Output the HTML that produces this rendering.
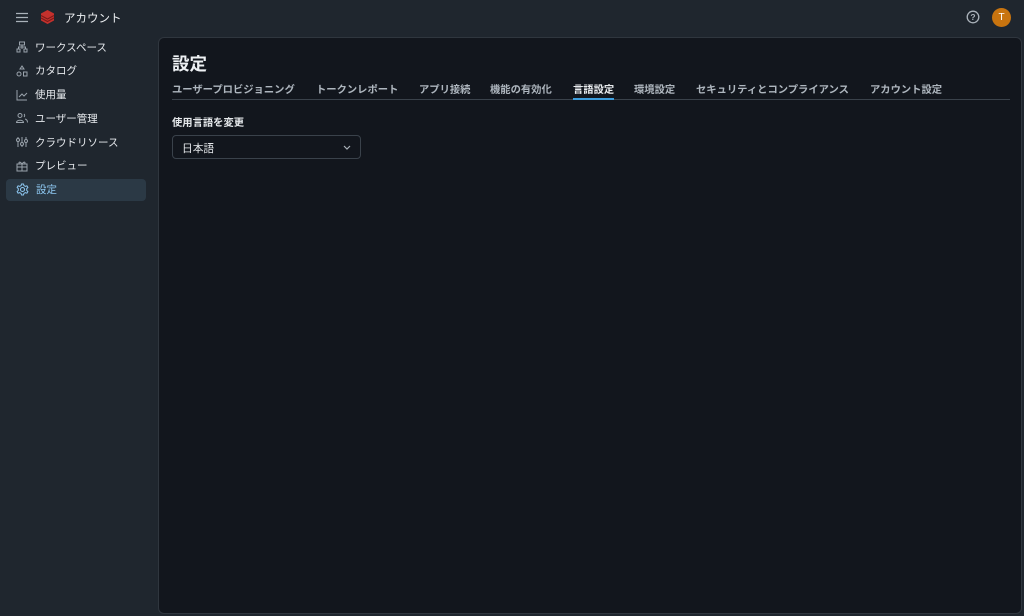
<!DOCTYPE html>
<html><head><meta charset="utf-8"><style>
*{margin:0;padding:0;box-sizing:border-box}
body{width:1024px;height:616px;background:#1f262e;font-family:"Liberation Sans","Noto Sans CJK JP",sans-serif;color:#e1e5ea;position:relative;overflow:hidden;font-size:12px}
.top{position:absolute;left:0;top:0;width:1024px;height:36px}
.nav{position:absolute;left:6px;top:36px;width:140px}
.item{height:22px;margin-bottom:1.8px;display:flex;align-items:center;padding-left:10px;font-size:10.5px;color:#e6e9ed;border-radius:4px}
.item svg{margin-right:7px}
.item.act{background:#2b3945;color:#8fc9f3}
.main{position:absolute;left:158px;top:37px;width:864px;height:577px;background:#12161d;border:1px solid #2f363e;border-radius:6px}
h1{position:absolute;left:13px;top:13px;font-size:17.5px;font-weight:bold;color:#eef1f4}
.tabs{position:absolute;left:13px;top:42px;width:838px;height:20px;border-bottom:1px solid #3a424b;font-size:10.3px;color:#aeb6be;font-weight:bold}
.tabs span{position:absolute;top:1px;white-space:nowrap}
.tabs .a{color:#e8ebee}
.tabs .a:after{content:"";position:absolute;left:0;right:0;top:17px;height:2px;background:#3c9ddd}
.lbl{position:absolute;left:13px;top:76px;font-size:10.3px;font-weight:bold;color:#e6e9ec}
.sel{position:absolute;left:13px;top:97px;width:189px;height:24px;border:1px solid #3a424b;border-radius:4px;padding:5px 9px;font-size:10.7px;color:#e6e9ec}
</style></head><body>
<div class="top">
<svg style="position:absolute;left:16px;top:12px" width="12" height="11"><path d="M0 1.5h12M0 5.5h12M0 9.5h12" stroke="#aab2ba" stroke-width="1.3"/></svg>
<svg style="position:absolute;left:40px;top:9px" width="15" height="16" viewBox="0 0 15 16"><path d="M7.5 1L14 4.5V11.5L7.5 15L1 11.5V4.5Z" fill="#c4312d"/><path d="M1 6.5l6.5 3.5 6.5-3.5M1 9l6.5 3.5 6.5-3.5" stroke="#7a1a18" fill="none"/></svg>
<div style="position:absolute;left:64px;top:10px;font-size:11.5px;color:#eceff2">アカウント</div>
<svg style="position:absolute;left:966px;top:10px" width="14" height="14"><circle cx="7" cy="7" r="5.8" stroke="#aab2ba" stroke-width="1.3" fill="none"/><text x="7" y="10.2" font-size="8.5" font-weight="bold" text-anchor="middle" fill="#aab2ba" font-family="Liberation Sans">?</text></svg>
<div style="position:absolute;left:992px;top:8px;width:19px;height:19px;border-radius:50%;background:#c8740f;color:#fff;font-size:10px;text-align:center;line-height:19px">T</div>
</div>
<div class="nav">
<div class="item"><svg width="12" height="12"><rect x="3.5" y="1" width="5" height="3" stroke="#9aa3ac" fill="none"/><rect x="1" y="8" width="3" height="3" stroke="#9aa3ac" fill="none"/><rect x="8" y="8" width="3" height="3" stroke="#9aa3ac" fill="none"/><path d="M6 4v4M2.5 8V6h7v2" stroke="#9aa3ac" fill="none"/></svg>ワークスペース</div>
<div class="item"><svg width="12" height="12"><path d="M6 1l2 3H4z" stroke="#9aa3ac" fill="none"/><circle cx="3" cy="9" r="2" stroke="#9aa3ac" fill="none"/><rect x="7.5" y="7" width="3.5" height="4" stroke="#9aa3ac" fill="none"/></svg>カタログ</div>
<div class="item"><svg width="12" height="12"><path d="M1 1v10h10M3 8l3-3 2 2 3-3" stroke="#9aa3ac" fill="none"/></svg>使用量</div>
<div class="item"><svg width="12" height="12"><circle cx="4" cy="3.5" r="2" stroke="#9aa3ac" fill="none"/><path d="M0.5 10.5c0-3 7-3 7 0zM8 2a2 2 0 010 3M9 7c2 .5 2.5 2 2.5 3.5" stroke="#9aa3ac" fill="none"/></svg>ユーザー管理</div>
<div class="item"><svg width="12" height="12"><path d="M2 1v10M6 1v10M10 1v10" stroke="#9aa3ac"/><circle cx="2" cy="4" r="1.5" fill="#1f262e" stroke="#9aa3ac"/><circle cx="6" cy="8" r="1.5" fill="#1f262e" stroke="#9aa3ac"/><circle cx="10" cy="5" r="1.5" fill="#1f262e" stroke="#9aa3ac"/></svg>クラウドリソース</div>
<div class="item"><svg width="12" height="12"><rect x="1" y="4" width="10" height="7" stroke="#9aa3ac" fill="none"/><path d="M1 7h10M6 4v7M6 4C4 1 2 2 3.5 4M6 4c2-3 4-2 2.5 0" stroke="#9aa3ac" fill="none"/></svg>プレビュー</div>
<div class="item act"><svg width="13" height="13" viewBox="0 0 13 13"><circle cx="6.5" cy="6.5" r="2" stroke="#8fc9f3" fill="none"/><path d="M5.5 1h2l.4 1.6 1.5.8 1.5-.6 1 1.7-1.2 1.1v1.8l1.2 1.1-1 1.7-1.5-.6-1.5.8-.4 1.6h-2l-.4-1.6-1.5-.8-1.5.6-1-1.7 1.2-1.1V5.6L1.1 4.5l1-1.7 1.5.6 1.5-.8z" stroke="#8fc9f3" fill="none" stroke-linejoin="round"/></svg>設定</div>
</div>
<div class="main">
<h1>設定</h1>
<div class="tabs">
<span style="left:0">ユーザープロビジョニング</span>
<span style="left:144px">トークンレポート</span>
<span style="left:247px">アプリ接続</span>
<span style="left:318px">機能の有効化</span>
<span class="a" style="left:401px">言語設定</span>
<span style="left:462px">環境設定</span>
<span style="left:524px">セキュリティとコンプライアンス</span>
<span style="left:698px">アカウント設定</span>
</div>
<div class="lbl">使用言語を変更</div>
<div class="sel">日本語<svg style="position:absolute;right:9px;top:9px" width="8" height="5"><path d="M1 1l3 3 3-3" stroke="#aab2ba" fill="none" stroke-width="1.2"/></svg></div>
</div>
</body></html>
